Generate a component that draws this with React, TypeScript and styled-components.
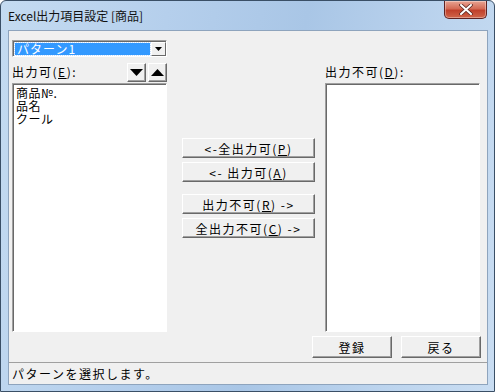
import * as React from 'react';
import styled, { createGlobalStyle } from 'styled-components';

const Global = createGlobalStyle`
	html, body {
		margin: 0;
		padding: 0;
		background: #ffffff;
	}
	body {
		font-family: 'Noto Sans CJK JP', 'Liberation Sans', sans-serif;
		font-size: 12px;
	}
`;

const Window = styled.div`
	width: 495px;
	height: 392px;
	box-sizing: border-box;
	display: flex;
	flex-direction: column;
	border: 1px solid #3a4f66;
	border-radius: 6px 6px 0 0;
	background: linear-gradient(100deg, #c4dbf1 0%, #b5cfec 30%, #a9c6e6 55%, #bcd4ee 80%, #c9ddf2 100%);
	overflow: hidden;
`;

const TitleBar = styled.div`
	height: 29px;
	display: flex;
	justify-content: space-between;
	align-items: flex-start;
	padding: 0 7px 0 7px;
`;

const Title = styled.div`
	margin-top: 6px;
	font-family: 'Noto Sans CJK JP', 'Liberation Sans', sans-serif;
	font-size: 12px;
	color: #111;
	letter-spacing: 0;
`;

const CloseButton = styled.div`
	width: 43px;
	height: 18px;
	box-sizing: border-box;
	border: 1px solid #5e2222;
	border-top: none;
	border-radius: 0 0 5px 5px;
	background: linear-gradient(#e8a493 0%, #d46a55 45%, #c0402b 55%, #d0654a 100%);
	display: flex;
	align-items: center;
	justify-content: center;
	box-shadow: inset 0 0 0 1px rgba(255, 255, 255, 0.35);
`;

const FrameRow = styled.div`
	flex: 1;
	display: flex;
	padding: 0 6px 6px 7px;
	min-height: 0;
`;

const Client = styled.div`
	flex: 1;
	display: flex;
	flex-direction: column;
	background: #f0f0f0;
	border: 1px solid #8ea4bd;
`;

const Main = styled.div`
	flex: 1;
	display: flex;
	padding: 9px 6px 0 3px;
`;

const Column = styled.div`
	width: 155px;
	display: flex;
	flex-direction: column;
`;

const Center = styled.div`
	width: 133px;
	margin: 98px 10px 0 15px;
	display: flex;
	flex-direction: column;
`;

const Combo = styled.div`
	height: 17px;
	box-sizing: border-box;
	display: flex;
	border: 1px solid;
	border-color: #a0a0a0 #ffffff #ffffff #a0a0a0;
	box-shadow: inset 1px 1px 0 #696969;
	background: #fff;
	padding: 1px 0 0 1px;
`;

const ComboText = styled.div`
	flex: 1;
	margin: 1px;
	background: #3399ff;
	color: #fff;
	line-height: 12px;
	padding-left: 2px;
	outline: 1px dotted #c8e0ff;
	letter-spacing: 1px;
`;

const ComboButton = styled.div`
	width: 15px;
	box-sizing: border-box;
	background: #f0f0f0;
	border: 1px solid;
	border-color: #ffffff #696969 #696969 #ffffff;
	display: flex;
	align-items: center;
	justify-content: center;
`;

const LabelRow = styled.div<{ $right?: boolean }>`
	height: 26px;
	display: flex;
	align-items: center;
	justify-content: space-between;
	margin-top: ${(p) => (p.$right ? '17px' : '0')};
`;

const Label = styled.span`
	letter-spacing: 1.5px;
	color: #000;
	padding-top: 3px;
`;

const ArrowGroup = styled.div`
	display: flex;
	gap: 2px;
	padding-top: 5px;
`;

const ClassicButton = styled.div<{ $w?: number; $h?: number }>`
	width: ${(p) => p.$w ?? 133}px;
	height: ${(p) => p.$h ?? 20}px;
	box-sizing: border-box;
	background: #f0f0f0;
	border: 1px solid;
	border-color: #ffffff #696969 #696969 #ffffff;
	box-shadow: inset -1px -1px 0 #a0a0a0;
	display: flex;
	align-items: center;
	justify-content: center;
	color: #000;
	letter-spacing: 1.5px;
`;

const List = styled.div`
	height: 249px;
	box-sizing: border-box;
	background: #fff;
	border: 1px solid;
	border-color: #a0a0a0 #ffffff #ffffff #a0a0a0;
	box-shadow: inset 1px 1px 0 #696969;
	padding: 2px 3px;
	display: flex;
	flex-direction: column;
`;

const ListItem = styled.div`
	line-height: 13px;
	color: #000;
	letter-spacing: 0.5px;
`;

const Gap = styled.div<{ $h: number }>`
	height: ${(p) => p.$h}px;
`;

const Footer = styled.div`
	display: flex;
	justify-content: flex-end;
	gap: 9px;
	padding: 4px 6px 0 0;
	height: 27px;
`;

const StatusBar = styled.div`
	height: 21px;
	border-top: 1px solid #a0a0a0;
	display: flex;
	align-items: center;
	padding-left: 3px;
	letter-spacing: 1.5px;
	color: #000;
`;

const U = styled.u`
	text-underline-offset: 1px;
`;

const Triangle = ({ up, size = 7 }: { up?: boolean; size?: number }) => (
	<svg width={size * 2 - 1} height={size} viewBox={`0 0 ${size * 2 - 1} ${size}`}>
		<polygon
			points={up ? `0,${size} ${size * 2 - 1},${size} ${size - 0.5},0` : `0,0 ${size * 2 - 1},0 ${size - 0.5},${size}`}
			fill="#000"
		/>
	</svg>
);

const CloseGlyph = () => (
	<svg width="14" height="11" viewBox="0 0 14 11">
		<path d="M2 1 L12 10 M12 1 L2 10" stroke="#5a2a24" strokeWidth="3.6" strokeLinecap="round" />
		<path d="M2 1 L12 10 M12 1 L2 10" stroke="#ffffff" strokeWidth="2" strokeLinecap="round" />
	</svg>
);

const App = () => {
	return (
		<>
			<Global />
			<Window>
				<TitleBar>
					<Title>Excel出力項目設定 [商品]</Title>
					<CloseButton>
						<CloseGlyph />
					</CloseButton>
				</TitleBar>
				<FrameRow>
					<Client>
						<Main>
							<Column>
								<Combo>
									<ComboText>パターン1</ComboText>
									<ComboButton>
										<Triangle size={4} />
									</ComboButton>
								</Combo>
								<LabelRow>
									<Label>
										出力可(<U>E</U>):
									</Label>
									<ArrowGroup>
										<ClassicButton $w={19} $h={19}>
											<Triangle size={7} />
										</ClassicButton>
										<ClassicButton $w={19} $h={19}>
											<Triangle up size={7} />
										</ClassicButton>
									</ArrowGroup>
								</LabelRow>
								<List>
									<ListItem>商品№.</ListItem>
									<ListItem>品名</ListItem>
									<ListItem>クール</ListItem>
								</List>
							</Column>
							<Center>
								<ClassicButton>
									&lt;-全出力可(<U>P</U>)
								</ClassicButton>
								<Gap $h={4} />
								<ClassicButton>
									&lt;- 出力可(<U>A</U>)
								</ClassicButton>
								<Gap $h={12} />
								<ClassicButton>
									出力不可(<U>R</U>) -&gt;
								</ClassicButton>
								<Gap $h={4} />
								<ClassicButton>
									全出力不可(<U>C</U>) -&gt;
								</ClassicButton>
							</Center>
							<Column>
								<LabelRow $right>
									<Label>
										出力不可(<U>D</U>):
									</Label>
								</LabelRow>
								<List />
							</Column>
						</Main>
						<Footer>
							<ClassicButton $w={80} $h={22}>登録</ClassicButton>
							<ClassicButton $w={80} $h={22}>戻る</ClassicButton>
						</Footer>
						<StatusBar>パターンを選択します。</StatusBar>
					</Client>
				</FrameRow>
			</Window>
		</>
	);
};

export default App;
